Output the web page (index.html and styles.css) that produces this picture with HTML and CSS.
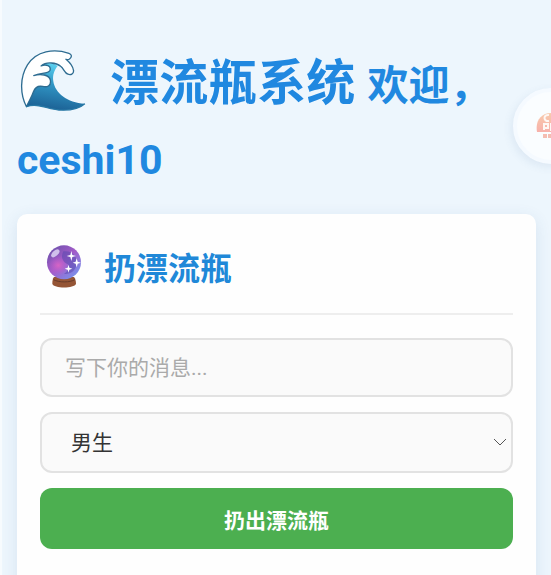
FILE: index.html
```html
<!DOCTYPE html>
<html lang="zh-CN">
<head>
<meta charset="utf-8">
<meta name="viewport" content="width=device-width, initial-scale=1">
<title>漂流瓶系统</title>
<link rel="stylesheet" href="styles.css">
</head>
<body>
<main class="page">
  <h1 class="title">
    <svg class="wave" viewBox="60 55 204 190" aria-hidden="true">
      <defs>
        <linearGradient id="sea" x1="0.6" y1="0" x2="0.4" y2="1">
          <stop offset="0" stop-color="#5fd6f4"/>
          <stop offset="0.45" stop-color="#3197c6"/>
          <stop offset="1" stop-color="#1b5f93"/>
        </linearGradient>
      </defs>
      <path fill="url(#sea)" d="M82 229C78 190 92 150 120 104C140 92 165 98 176 106C166 118 160 134 163 152C168 188 205 216 258 220C240 236 212 241 180 239C145 236 115 217 82 229Z"/>
      <path fill="#fff" stroke="#2e6c91" stroke-width="4" stroke-linejoin="round" d="M82 229C62 190 62 140 85 103C112 60 165 53 210 68C219 71 220 79 212 85C208 88 204 87 201 86C211 94 222 106 224 120C225 131 215 134 207 131C197 128 195 114 185 107C172 96 142 92 126 106C142 99 157 107 153 119C148 131 126 126 104 135C124 129 151 132 154 149C157 165 146 171 131 168C117 165 108 171 103 184C97 202 90 210 82 229Z"/>
      <path fill="none" stroke="#2878a5" stroke-width="4" d="M82 229C115 217 145 236 180 239C212 241 240 236 258 220"/>
    </svg>
    <span>漂流瓶系统</span>
    <span class="welcome">欢迎，</span><span class="welcome">ceshi10</span>
  </h1>

  <form class="card">
    <h2 class="card-title">
      <svg class="ball" viewBox="48 44 108 132" aria-hidden="true">
        <defs>
          <linearGradient id="glass" x1="0" y1="0" x2="0.9" y2="1">
            <stop offset="0" stop-color="#6350a6"/>
            <stop offset="0.5" stop-color="#a35bc9"/>
            <stop offset="1" stop-color="#739af0"/>
          </linearGradient>
          <radialGradient id="glow">
            <stop offset="0" stop-color="#d765c4"/>
            <stop offset="1" stop-color="#b65bce" stop-opacity="0"/>
          </radialGradient>
        </defs>
        <path fill="#955535" d="M72 143h60c4 5 6 12 6 20c-5 15-67 15-71 0c0-8 1-15 5-20Z"/>
        <path fill="none" stroke="#673b2a" stroke-width="3" d="M71 151c14 9 50 9 63 0"/>
        <circle cx="102" cy="99" r="51" fill="url(#glass)"/>
        <ellipse cx="85" cy="108" rx="34" ry="31" fill="url(#glow)"/>
        <path fill="#5948ae" opacity=".55" d="M100 66c28-3 43 17 40 39c-3 20-20 31-38 29c13-10 17-17 12-29c-14-6-24-20-14-39Z"/>
        <ellipse cx="76" cy="72" rx="15" ry="8" fill="#ddd2f4" opacity=".85" transform="rotate(-42 76 72)"/>
        <path fill="#fff" d="M124 65l3 12 11 3-11 3-3 12-3-12-11-3 11-3ZM140 87l3 10 10 3-10 3-3 11-3-11-9-3 9-3ZM116 106l2 9 9 3-9 3-2 9-3-9-9-3 9-3Z"/>
      </svg>
      <span class="card-label">扔漂流瓶</span>
    </h2>
    <input class="field message" type="text" placeholder="写下你的消息..." aria-label="消息">
    <div class="select-wrap">
      <select class="field gender" aria-label="性别">
        <option>男生</option>
        <option>女生</option>
      </select>
      <svg class="chevron" viewBox="0 0 14 8" aria-hidden="true"><path d="M1 1l6 6 6-6"/></svg>
    </div>
    <button class="submit" type="button">扔出漂流瓶</button>
  </form>
</main>

<button class="floating" type="button" aria-label="快捷入口">
  <svg class="badge" viewBox="0 0 30 28" aria-hidden="true">
    <defs>
      <linearGradient id="warm" x1="0" y1="0" x2="0" y2="1">
        <stop offset="0" stop-color="#f8c5a4"/>
        <stop offset="1" stop-color="#f7a9a3"/>
      </linearGradient>
    </defs>
    <path fill="url(#warm)" d="M1 20C-1 9 5 1 15 1s16 8 14 19Z"/>
    <path fill="none" stroke="#fff7f3" stroke-width="2" d="M13 3c-6-1-6 7 0 6M17 3v6h5M8 18v-6h4v4H8M15 18v-6h6v6Z"/>
    <path fill="none" stroke="#f4b7aa" stroke-width="4" stroke-dasharray="4 1" d="M7 24h16"/>
  </svg>
</button>
</body>
</html>
```
FILE: styles.css
```css
* {
  box-sizing: border-box;
}

body {
  margin: 0;
  min-height: 100vh;
  overflow-x: hidden;
  border-left: 2px solid #f7fbfe;
  background: #edf6fd;
  color: #333;
  font-family: Roboto, "Noto Sans CJK SC", sans-serif;
}

.page {
  padding: 48px 15px 0;
}

.title {
  margin: 0 0 18px;
  color: #2088e0;
  font-size: 49px;
  line-height: 71px;
  font-weight: 700;
}

.wave {
  width: 68px;
  height: 63px;
  margin: 0 11px 0 2px;
  vertical-align: -12px;
}

.welcome {
  font-size: 41px;
}

.card {
  display: flex;
  flex-direction: column;
  padding: 25px 23px 48px;
  border-radius: 10px;
  background: #fefefe;
  box-shadow: 0 4px 16px rgba(50, 90, 150, 0.12);
}

.card-title {
  display: flex;
  align-items: center;
  gap: 22px;
  margin: 0 0 23px;
  padding: 0 6px 21px;
  border-bottom: 2px solid #eee;
  color: #2088d8;
  font-size: 32px;
  line-height: 45px;
  font-weight: 700;
}

.card-label {
  padding-top: 8px;
}

.ball {
  width: 36px;
  height: 44px;
}

.field {
  width: 100%;
  border: 2px solid #e2e2e2;
  border-radius: 12px;
  background: #fafafa;
  color: #333;
  font: inherit;
  font-size: 21px;
}

.message {
  height: 59px;
  margin-bottom: 15px;
  padding: 0 23px;
}

.message::placeholder {
  color: #aaa;
}

.select-wrap {
  position: relative;
  margin-bottom: 15px;
}

.gender {
  display: block;
  height: 61px;
  padding: 0 29px;
  appearance: none;
}

.chevron {
  position: absolute;
  top: 26px;
  right: 6px;
  width: 14px;
  height: 8px;
  fill: none;
  stroke: #555;
  pointer-events: none;
}

.submit {
  height: 61px;
  border: 0;
  border-radius: 12px;
  background: #4caf50;
  color: #fff;
  font: inherit;
  font-size: 21px;
  font-weight: 700;
}

.floating {
  position: fixed;
  top: 88px;
  right: -38px;
  display: grid;
  place-items: center;
  width: 76px;
  height: 76px;
  padding: 0;
  border: 4px solid #f5faff;
  border-radius: 50%;
  background: #fafdff;
  box-shadow: -2px 3px 8px rgba(70, 110, 160, 0.1);
}

.badge {
  width: 30px;
  height: 28px;
  opacity: 0.9;
}
```
